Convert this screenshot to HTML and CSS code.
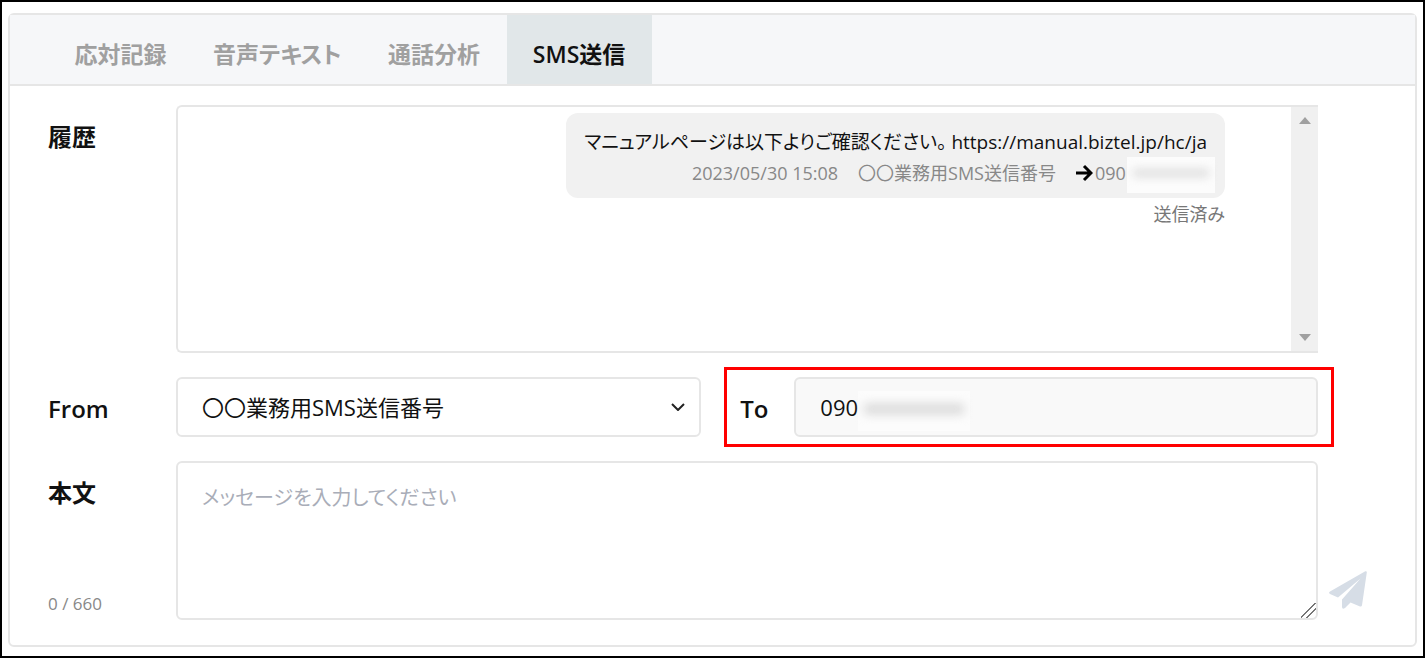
FILE: index.html
```html
<!DOCTYPE html>
<html lang="ja">
<head>
  <meta charset="UTF-8">
  <meta name="viewport" content="width=device-width, initial-scale=1">
  <title>SMS送信</title>
  <link rel="stylesheet" href="styles.css">
</head>
<body>

  <main class="panel">

    <!-- Tabs -->
    <nav class="tabs">
      <button type="button" class="tab">応対記録</button>
      <button type="button" class="tab">音声テキスト</button>
      <button type="button" class="tab">通話分析</button>
      <button type="button" class="tab active">SMS送信</button>
    </nav>

    <form class="form">

      <!-- History -->
      <section class="row">
        <h2 class="label">履歴</h2>
        <div class="history">
          <div class="messages">
            <div class="bubble">
              <p class="message">マニュアルページは以下よりご確認ください。 https://manual.biztel.jp/hc/ja</p>
              <p class="meta">
                <span class="date">2023/05/30 15:08</span>
                <span class="sender">〇〇業務用SMS送信番号</span>
                <svg class="arrow" viewBox="0 0 18 18" aria-hidden="true"><path d="M1 9H16M9 2L16 9L9 16"/></svg>
                <span class="number">090<span class="mask"></span></span>
              </p>
            </div>
            <p class="status">送信済み</p>
          </div>
          <div class="scrollbar">
            <svg viewBox="0 0 12 7" aria-hidden="true"><path d="M0 7L6 0L12 7Z"/></svg>
            <svg viewBox="0 0 12 7" aria-hidden="true"><path d="M0 0L6 7L12 0Z"/></svg>
          </div>
        </div>
      </section>

      <!-- From / To -->
      <div class="row">
        <label class="label" for="from">From</label>
        <div class="numbers">
          <div class="select">
            <select id="from">
              <option>〇〇業務用SMS送信番号</option>
            </select>
            <svg class="chevron" viewBox="0 0 14 8" aria-hidden="true"><path d="M1 1L7 7L13 1"/></svg>
          </div>
          <div class="to">
            <label class="to-label" for="to">To</label>
            <div class="to-field">
              <input id="to" type="text" value="090" readonly>
              <span class="mask"></span>
            </div>
          </div>
        </div>
      </div>

      <!-- Body -->
      <div class="row">
        <div class="side">
          <label class="label" for="message">本文</label>
          <span class="count">0 / 660</span>
        </div>
        <textarea id="message" placeholder="メッセージを入力してください"></textarea>
        <button type="button" class="send" aria-label="送信">
          <svg viewBox="0 0 38 38" aria-hidden="true"><path d="M36.300 .3Q38 -.2 37.800 1.600L33 34.200Q32.600 36 31 35.400L21.500 31.500L16 37Q13.300 39 13 36V28.500L31.500 7.500L9 26.500L1 23Q-1 21.800 1 20.500Z"/></svg>
        </button>
      </div>

    </form>
  </main>

</body>
</html>
```
FILE: styles.css
```css
* {
  box-sizing: border-box;
}

body {
  display: flex;
  min-height: 100vh;
  margin: 0;
  padding: 11px 6px 9px;
  border: 2px solid #000;
  background: #fff;
  color: #111;
  font-family: "Open Sans", "Noto Sans CJK JP", sans-serif;
  font-feature-settings: "palt";
}

h2, p {
  margin: 0;
}

button, input, select, textarea {
  color: inherit;
  font: inherit;
  font-feature-settings: inherit;
}

.panel {
  flex: 1;
  min-width: 0;
  border: 2px solid #e6e6e6;
  border-radius: 6px;
}

/* Tabs */
.tabs {
  display: flex;
  height: 71px;
  padding-left: 38px;
  border-bottom: 2px solid #e6e6e6;
  background: #f6f7f9;
}

.tab {
  min-width: 145px;
  padding: 6px 20px 0;
  border: none;
  background: none;
  color: #a0a0a0;
  font-size: 23px;
  font-weight: 600;
  cursor: pointer;
}

.tab.active {
  background: #e1e7e9;
  color: #111;
}

/* Form rows */
.form {
  display: flex;
  flex-direction: column;
  gap: 24px;
  padding: 19px 97px 0 38px;
}

.row {
  display: flex;
  position: relative;
}

.label {
  flex: none;
  width: 128px;
  padding-top: 14px;
  font-size: 24px;
  font-weight: 600;
  line-height: 36px;
}

/* History */
.history {
  display: flex;
  flex: 1;
  height: 248px;
  border: 2px solid #e6e6e6;
  border-right: none;
  border-radius: 6px 0 0 6px;
}

.messages {
  display: flex;
  flex: 1;
  flex-direction: column;
  align-items: flex-end;
  padding: 6px 66px 0 0;
}

.bubble {
  padding: 12px 18px 11px;
  border-radius: 12px;
  background: #f1f1f1;
}

.message {
  font-size: 19px;
  line-height: 34px;
}

.meta {
  display: flex;
  align-items: center;
  justify-content: flex-end;
  color: #888;
  font-size: 18px;
  line-height: 28px;
}

.sender {
  margin: 0 19px 0 20px;
}

.arrow {
  width: 18px;
  height: 18px;
  margin-right: 2px;
  fill: none;
  stroke: #000;
  stroke-width: 3;
}

.number {
  position: relative;
  width: 112px;
}

/* Hides the rest of a phone number */
.mask {
  position: absolute;
  background: #fcfcfc;
}

.mask::before {
  content: "";
  position: absolute;
  inset: 12px 6px 16px;
  background: #ddd;
  filter: blur(5px);
}

.number .mask {
  top: -2px;
  right: -8px;
  width: 88px;
  height: 36px;
}

.status {
  color: #777;
  font-size: 18px;
  line-height: 32px;
}

.scrollbar {
  display: flex;
  flex-direction: column;
  align-items: center;
  justify-content: space-between;
  width: 27px;
  padding: 10px 0;
  background: #f0f0f0;
}

.scrollbar svg {
  width: 12px;
  height: 7px;
  fill: #a0a0a0;
}

/* From / To */
.numbers {
  display: flex;
  flex: 1;
  gap: 23px;
}

.select {
  position: relative;
  width: 46%;
}

select, input {
  width: 100%;
  height: 60px;
  padding: 0 24px;
  border: 2px solid #e6e6e6;
  border-radius: 6px;
  font-size: 22px;
}

select {
  appearance: none;
  background: #fff;
}

.chevron {
  position: absolute;
  top: 26px;
  right: 16px;
  width: 14px;
  height: 8px;
  fill: none;
  stroke: #222;
  stroke-width: 2;
}

.to {
  display: flex;
  flex: 1;
  margin: -10px -16px -10px 0;
  padding: 7px 13px;
  border: 3px solid #f00;
}

.to-label {
  width: 54px;
  padding-top: 14px;
  font-size: 24px;
  font-weight: 600;
  line-height: 36px;
}

.to-field {
  position: relative;
  flex: 1;
}

input {
  background: #f9f9f9;
}

.to-field .mask {
  top: 14px;
  left: 64px;
  width: 112px;
  height: 40px;
}

/* Body */
.side {
  display: flex;
  flex-direction: column;
  justify-content: space-between;
}

.count {
  color: #888;
  font-size: 17px;
  line-height: 32px;
}

textarea {
  display: block;
  flex: 1;
  min-width: 0;
  height: 159px;
  padding: 18px 24px;
  border: 2px solid #e6e6e6;
  border-radius: 6px;
  background: #fff;
  font-size: 20px;
  line-height: 34px;
}

textarea::placeholder {
  color: #a9adb8;
}

textarea::-webkit-resizer {
  background: linear-gradient(135deg, transparent 44%, #777 45%, #777 50%, transparent 51%, transparent 65%, #777 66%, #777 71%, transparent 72%);
}

.send {
  position: absolute;
  right: -49px;
  bottom: 11px;
  padding: 0;
  border: none;
  background: none;
  cursor: pointer;
}

.send svg {
  display: block;
  width: 38px;
  height: 38px;
  fill: #d6dde6;
}
```
